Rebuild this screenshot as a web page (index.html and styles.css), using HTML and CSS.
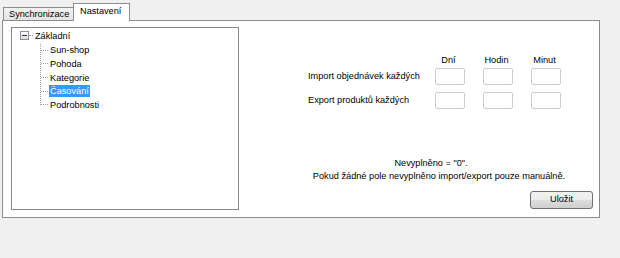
FILE: index.html
```html
<!DOCTYPE html>
<html>
<head>
<meta charset="utf-8">
<link rel="stylesheet" href="styles.css">
</head>
<body>
<div class="tabs">
  <div class="tab">Synchronizace</div>
  <div class="tab active">Nastavení</div>
</div>
<div class="panel">
  <div class="tree">
    <div class="root">
      <span class="box"></span><span class="hline root-line"></span><span class="label">Základní</span>
    </div>
    <div class="children">
      <div class="item"><span class="hline"></span><span class="label">Sun-shop</span></div>
      <div class="item"><span class="hline"></span><span class="label">Pohoda</span></div>
      <div class="item"><span class="hline"></span><span class="label">Kategorie</span></div>
      <div class="item"><span class="hline"></span><span class="label selected">Časování</span></div>
      <div class="item last"><span class="hline"></span><span class="label">Podrobnosti</span></div>
    </div>
  </div>
  <div class="right">
    <div class="form">
      <div></div>
      <div class="head">Dní</div>
      <div class="head">Hodin</div>
      <div class="head">Minut</div>
      <div class="rowlabel">Import objednávek každých</div>
      <div class="field"></div>
      <div class="field"></div>
      <div class="field"></div>
      <div class="rowlabel">Export produktů každých</div>
      <div class="field"></div>
      <div class="field"></div>
      <div class="field"></div>
    </div>
    <div class="note">
      <div class="n1">Nevyplněno = "0".</div>
      <div>Pokud žádné pole nevyplněno import/export pouze manuálně.</div>
    </div>
    <div class="actions"><div class="button">Uložit</div></div>
  </div>
</div>
</body>
</html>
```
FILE: styles.css
```css
html, body {
  margin: 0;
  padding: 0;
  background: #f0f0f0;
  width: 620px;
  height: 258px;
  font-family: "Liberation Sans", Arial, sans-serif;
  font-size: 9.2px;
  color: #000;
}
.tabs {
  display: flex;
  align-items: flex-end;
  padding: 4px 0 0 3px;
  height: 16px;
  position: relative;
  z-index: 1;
}
.tab {
  height: 12px;
  line-height: 12px;
  padding: 0 0 0 5px;
  border: 1px solid #898c95;
  border-bottom: none;
  background: linear-gradient(#f3f3f3, #e3e3e3);
  box-sizing: content-box;
  width: 64px;
}
.tab.active {
  height: 17px;
  width: 49px;
  line-height: 14px;
  background: #fff;
  margin-left: -1px;
  margin-bottom: -1px;
  padding: 0 0 0 6px;
}
.panel {
  margin-left: 2px;
  background: #fff;
  border: 1px solid #898c95;
  display: flex;
  padding: 6px 0 0 8px;
  box-sizing: border-box;
  width: 598px;
  height: 198px;
}
.tree {
  width: 228px;
  height: 183px;
  border: 1px solid #828790;
  box-sizing: border-box;
  padding: 1px 0 0 8px;
  flex: none;
}
.root {
  display: flex;
  align-items: center;
  height: 13.6px;
}
.box {
  width: 7px;
  height: 7px;
  border: 1px solid #919191;
  background: linear-gradient(#ffffff, #dcdcdc);
  position: relative;
  flex: none;
}
.box::after {
  content: "";
  position: absolute;
  left: 1px;
  right: 1px;
  top: 3px;
  height: 1px;
  background: #1e395b;
}
.hline {
  width: 7px;
  height: 0;
  border-top: 1px dotted #a0a0a0;
  flex: none;
}
.root-line {
  width: 4px;
  margin-right: 1px;
}
.label {
  padding: 0 1px;
  line-height: 12px;
}
.selected {
  background: #3399ff;
  color: #fff;
}
.children {
  margin-left: 20px;
  margin-top: 1px;
  border-left: 1px dotted #a0a0a0;
  height: 61px;
}
.item {
  display: flex;
  align-items: center;
  height: 13.6px;
}
.item .hline {
  margin-right: 1px;
}
.right {
  flex: 1;
  display: flex;
  flex-direction: column;
  padding: 26px 0 0 69px;
}
.form {
  display: grid;
  grid-template-columns: 109px 30px 30px 30px;
  column-gap: 18px;
  grid-template-rows: 14px 18px 24px;
  align-items: end;
}
.head {
  align-self: center;
  text-align: center;
  margin-left: -3px;
  line-height: 12px;
}
.rowlabel {
  height: 17px;
  line-height: 17px;
  white-space: nowrap;
}
.field {
  height: 17px;
  border: 1px solid #c9ced4;
  border-radius: 2px;
  box-sizing: border-box;
  background: #fff;
}
.note {
  margin-top: 48px;
  width: 262px;
  text-align: center;
  line-height: 12.5px;
}
.note .n1 {
  margin-left: -16px;
}
.actions {
  display: flex;
  justify-content: flex-end;
  padding-right: 6px;
  margin-top: 9px;
}
.button {
  width: 63px;
  height: 18px;
  box-sizing: border-box;
  border: 1px solid #707070;
  border-radius: 3px;
  background: linear-gradient(#f2f2f2 0%, #ebebeb 50%, #dddddd 51%, #cfcfcf 100%);
  text-align: center;
  line-height: 15px;
}
```
